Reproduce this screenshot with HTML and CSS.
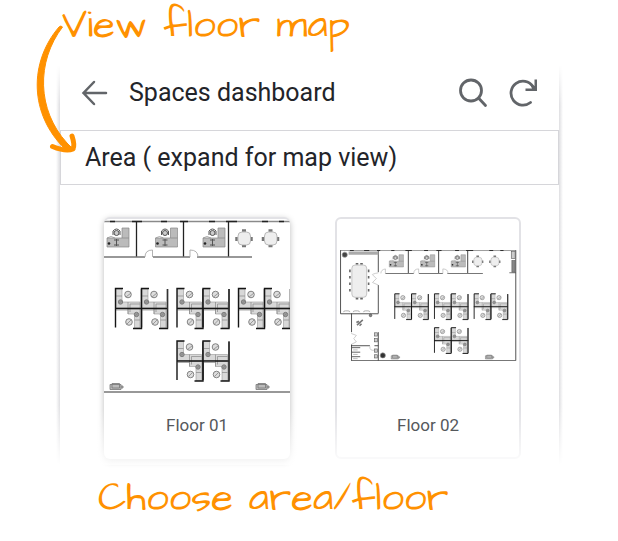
FILE: index.html
```html
<!DOCTYPE html>
<html lang="en">
<head>
<meta charset="utf-8">
<meta name="viewport" content="width=device-width, initial-scale=1">
<title>Spaces dashboard</title>
<link rel="stylesheet" href="styles.css">
</head>
<body>
<svg class="defs" aria-hidden="true">
  <defs>
    <g id="desk">
      <path d="M107 238H122V228H129V247H107Z" fill="#bbb" stroke="#888" stroke-width=".7"/>
      <path d="M122 238H129" stroke="#888" stroke-width=".7"/>
      <circle cx="116.500" cy="233" r="2.500" fill="#ccc" stroke="#555"/>
      <path d="M113 235V231Q116.500 227 120 231V235M114 240H119M114 245H119M116.500 239V246" fill="none" stroke="#555"/>
      <circle cx="109" cy="243.500" r="1.300" fill="#222"/>
      <path d="M107 238Q111 235 115 238" fill="none" stroke="#888" stroke-width=".7"/>
    </g>
    <g id="table">
      <path d="M242 230.500H246M242 246H246M236.500 237V241M251.500 237V241" stroke="#777" stroke-width="2.500"/>
      <rect x="238" y="232" width="12.500" height="13" rx="4" fill="#eee" stroke="#aaa" stroke-width=".8"/>
    </g>
    <g id="pair">
      <path d="M116 289H122V302H140V308H116ZM128 309H140V328H134.500V314H128Z" fill="#d8d8d8" stroke="#999" stroke-width=".6"/>
      <path d="M116 296H122M128 302V314M130 304H140M130 304V312M116 310H128M134.500 320H140" fill="none" stroke="#888" stroke-width=".7"/>
      <g fill="#ddd" stroke="#777" stroke-width=".9">
        <circle cx="128" cy="294.500" r="3.300"/><circle cx="129" cy="322" r="3.300"/>
        <circle cx="120.500" cy="302" r="2.200" fill="#999"/><circle cx="136.500" cy="314.500" r="2.200" fill="#999"/>
      </g>
      <path d="M126 297L131 293M127 324L131 320M119 303L122 301M135 316L138 313" stroke="#888" stroke-width=".8"/>
      <path d="M123 288.500H115.500V327.500M115 308.500H142M141.500 289V328.500H133" fill="none" stroke="#151515" stroke-width="1.400"/>
    </g>
    <g id="pod">
      <use href="#pair"/><use href="#pair" x="26"/>
      <path d="M167.500 289V328" stroke="#333" stroke-width="1.300"/>
    </g>
    <g id="sofa">
      <path d="M110 384.500H121V389.500H110ZM112 383.500H119.500V388H112ZM121 386H123V388H121" fill="#bbb" stroke="#777" stroke-width=".8"/>
    </g>
    <g id="plan">
      <path d="M31 221.500H303" stroke="#8a8a8a" stroke-width="1.300"/>
      <path d="M46 221.500H52M68 221.500H76M88 221.500H93M110 221.500H115M132 221.500H142M161 221.500H167M180 221.500H188M209 221.500H215M226 221.500H237M262 221.500H268M279 221.500H284" stroke="#222" stroke-width="1.400"/>
      <path d="M136.500 222V257M183.500 222V257M228.500 222V257" stroke="#222" stroke-width="1.300"/>
      <path d="M101 257H145M153 257H190M197 257H252M293 256H303M48 392H303" stroke="#777" stroke-width="1.600"/>
      <path d="M31.500 221V319.500H90M90 221V255M90 275V319M48.500 319V348M48.500 367V392M90 348V392M303 221V392M48 369H77M84 369H90" fill="none" stroke="#333" stroke-width="1.300"/>
      <path d="M152.500 257V250Q145 250 145 257M190 257V250Q198 250 198 257M101 257V250Q94 251 94 257M90 256Q80 258 81 259L87 265L81 271L90 275M48 350L56 353L52 358L56 363L48 367M77 370Q76 377 84 376" fill="none" stroke="#aaa" stroke-width=".9"/>
      <use href="#desk"/><use href="#desk" x="48.500"/><use href="#desk" x="96"/>
      <use href="#table"/><use href="#table" x="26.500"/>
      <use href="#pod"/><use href="#pod" x="61.500"/><use href="#pod" x="123"/><use href="#pod" x="61.500" y="52.500"/>
      <use href="#sofa"/><use href="#sofa" x="146"/>
      <path d="M44 225.500H90" stroke="#aaa" stroke-width="5"/>
      <circle cx="38" cy="228" r="4" fill="#444" stroke="#999"/><circle cx="97" cy="384" r="4" fill="#333" stroke="#999"/>
      <rect x="49" y="244" width="23" height="50" rx="5" fill="#eee" stroke="#aaa"/>
      <path d="M46 251V287M75 251V287" stroke="#666" stroke-width="2.500" stroke-dasharray="4 6"/>
      <path d="M55 242H59M62 242H66M55 296H59M62 296H66" stroke="#666" stroke-width="2.500"/>
      <path d="M36 317Q36 315 39 315H43Q46 315 46 317M51 317Q51 315 54 315H58Q61 315 61 317M67 317Q67 315 70 315H74Q77 315 77 317" fill="none" stroke="#888"/>
      <path d="M57 337L66 329M56 333L60 331M61 338L64 335" stroke="#777" stroke-width="2.500"/>
      <circle cx="78" cy="322" r="2" fill="#888" stroke="#444"/>
      <path d="M49 372H62M49 379H62M49 386H62" stroke="#444" stroke-width="1.300"/>
      <path d="M51 375.500H58M51 382.500H58M51 389H58" stroke="#bbb" stroke-width="1.500"/>
      <g fill="#ccc" stroke="#555" stroke-width=".9">
        <rect x="84" y="349" width="5" height="5"/><rect x="84" y="358" width="5" height="5"/><rect x="84" y="374" width="5" height="5"/><rect x="84" y="383" width="5" height="5"/>
        <rect x="296" y="223" width="6" height="11"/><rect x="297" y="237" width="5" height="18" fill="#888"/>
      </g>
    </g>
  </defs>
</svg>

<main class="page">
  <h1 class="note note-top">View floor map</h1>
  <section class="panel">
    <header class="bar">
      <button class="icon" aria-label="Back"><svg viewBox="0 0 28 28"><path d="M26 14H3.500M14 3L3.500 14L14 25"/></svg></button>
      <h2 class="title">Spaces dashboard</h2>
      <button class="icon large" aria-label="Search"><svg viewBox="0 0 30 30"><circle cx="12" cy="12.500" r="10.500"/><path d="M19.500 20L26.500 27.500"/></svg></button>
      <button class="icon large" aria-label="Refresh"><svg viewBox="0 0 30 30"><path d="M21.500 24.500A12 12 0 1 1 24 8.500"/><path class="head" d="M16.500 10.500H23L21.500 7L25.500 8V1.500H28V13H16.500Z"/></svg></button>
    </header>
    <button class="area">Area ( expand for map view)</button>
    <div class="floors">
      <a class="card raised" href="#floor-01">
        <svg class="map" viewBox="104 219 186 176" aria-hidden="true"><use href="#plan"/></svg>
        <span class="label">Floor 01</span>
      </a>
      <a class="card" href="#floor-02">
        <svg class="map" viewBox="26 173 282 272" aria-hidden="true"><use href="#plan"/></svg>
        <span class="label">Floor 02</span>
      </a>
    </div>
  </section>
  <p class="note note-bottom">Choose area/floor</p>
  <svg class="arrow" viewBox="34 22 46 134" aria-hidden="true">
    <path d="M62.500 27C36 62 37 110 67 143L72 148L65 149C29 114 29 62 59 27Q61 25 62.500 27Z" fill="#ff9100" stroke="#ff9100" stroke-width="1"/>
    <path d="M72 136Q75 145 73 149Q66 152 52.500 146.500" fill="none" stroke="#ff9100" stroke-width="5" stroke-linecap="round" stroke-linejoin="round"/>
    <path d="M64 143L73 149L66 150Z" fill="#ff9100" stroke="#ff9100" stroke-width="2"/>
  </svg>
</main>
</body>
</html>
```
FILE: styles.css
```css
* { box-sizing: border-box; }
body {
  margin: 0;
  background: #fff;
  color: #232429;
  font-family: Roboto, sans-serif;
}
button {
  border: 0;
  padding: 0;
  background: none;
  color: inherit;
  font: inherit;
}
.defs { position: absolute; width: 0; height: 0; }
.page { position: relative; }
.note {
  margin: 0;
  color: #ff9100;
  font: 400 40px/52px "Architects Daughter", "DejaVu Sans", sans-serif;
  white-space: nowrap;
}
.note-top { padding: 0 0 13px 62px; }
.note-bottom { padding: 8px 0 16px 98px; }
.arrow {
  position: absolute;
  left: 34px;
  top: 22px;
  width: 46px;
  height: 134px;
  pointer-events: none;
}
.panel {
  position: relative;
  margin: 0 59px 0 60px;
  background: #fff;
}
.panel::before {
  content: "";
  position: absolute;
  z-index: -1;
  inset: 0 -4px;
  background: linear-gradient(to right, #fff, #dedee1 4px, #dedee1 calc(100% - 4px), #fff);
  mask-image: linear-gradient(transparent, #000 40px, #000 calc(100% - 60px), transparent);
}
.panel::after {
  content: "";
  position: absolute;
  inset: auto 0 0;
  height: 56px;
  background: linear-gradient(transparent, #fffc 48px);
  pointer-events: none;
}
.bar {
  display: flex;
  align-items: center;
  height: 65px;
  padding: 0 20px 10px 20px;
}
.icon { display: flex; width: 28px; }
.icon svg {
  width: 100%;
  fill: none;
  stroke: #626569;
  stroke-width: 2.5;
  stroke-linecap: round;
}
.large { width: 30px; margin-left: 20px; }
.large svg { stroke-width: 2.8; }
.icon .head { fill: #626569; stroke: none; }
.title {
  flex: 1;
  margin: 0 0 0 21px;
  font-size: 25px;
  font-weight: 400;
  line-height: 32px;
}
.area {
  display: block;
  width: 100%;
  height: 55px;
  padding-left: 24px;
  border: 1px solid #d6d6da;
  font-size: 25px;
  line-height: 32px;
  text-align: left;
}
.floors {
  display: grid;
  grid-template-columns: 1fr 1fr;
  gap: 45px;
  padding: 32px 38px 6px 44px;
}
.card {
  display: flex;
  flex-direction: column;
  overflow: hidden;
  border: 2px solid #e2e2e6;
  border-radius: 6px;
  background: #fff;
  color: #55585c;
  text-decoration: none;
}
.raised {
  border-width: 2px 0;
  border-bottom-color: #fff;
  box-shadow: 0 2px 6px #0004;
}
.map { width: 100%; height: 176px; }
.label {
  position: relative;
  z-index: 1;
  padding: 20px 0 22px;
  font-size: 17px;
  line-height: 20px;
  text-align: center;
}
```
